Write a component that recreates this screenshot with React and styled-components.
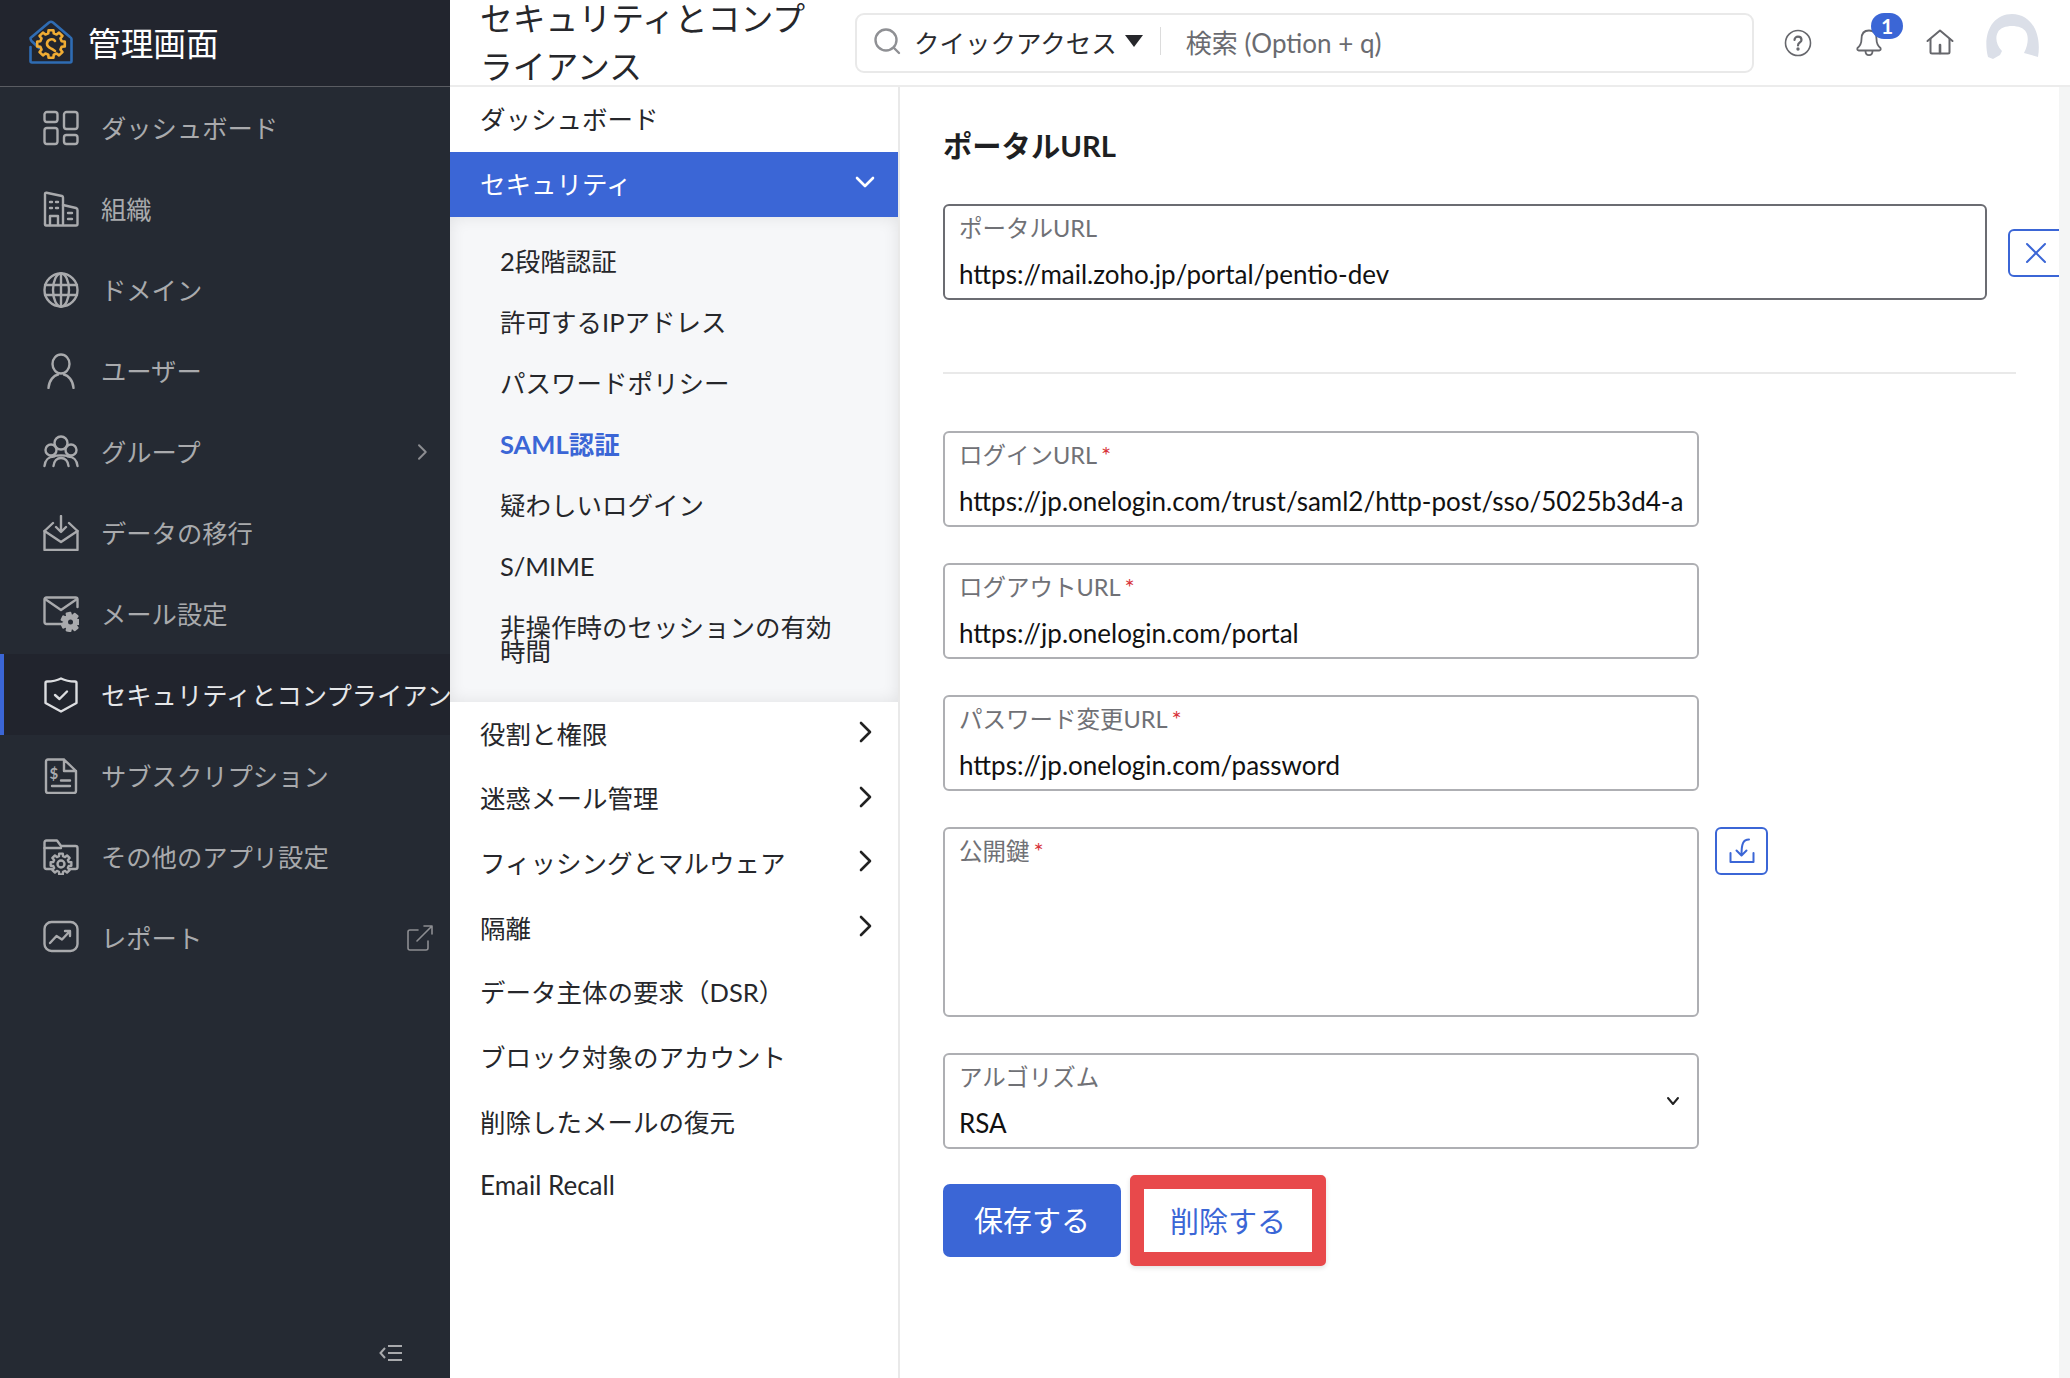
import React from 'react'
import styled, { createGlobalStyle } from 'styled-components'

const FONT = `Lato, "Noto Sans CJK JP", sans-serif`
const BLUE = '#3b66d6'

const GlobalStyle = createGlobalStyle`
  html, body {
    margin: 0;
    padding: 0;
    background: #fff;
    font-family: ${FONT};
  }
  * { box-sizing: border-box; }
`

// gear outline, used by the logo and the two settings icons
const gearPath = (cx, cy, outer, inner, teeth) => {
  const step = (Math.PI * 2) / teeth
  let d = ''
  for (let i = 0; i < teeth; i++) {
    const a = i * step
    const pts = [
      [a - step * 0.22, outer],
      [a + step * 0.22, outer],
      [a + step * 0.32, inner],
      [a + step * 0.68, inner]
    ].map(([t, r]) => `${(cx + Math.cos(t) * r).toFixed(2)} ${(cy + Math.sin(t) * r).toFixed(2)}`)
    d += `${i === 0 ? 'M' : 'L'}${pts[0]} L${pts[1]} L${pts[2]} L${pts[3]} `
  }
  return d + 'Z'
}

const Ico = ({ children, size = 36, box = 36, color = '#a9aaad', sw = 2.4 }) => (
  <svg width={size} height={size} viewBox={`0 0 ${box} ${box}`} fill="none" stroke={color} strokeWidth={sw} strokeLinecap="round" strokeLinejoin="round">
    {children}
  </svg>
)

const icons = {
  dashboard: (
    <>
      <rect x="1.500" y="2" width="13" height="10" rx="2.500" />
      <rect x="21" y="2" width="13.500" height="17" rx="2.500" />
      <rect x="1.500" y="18" width="13" height="16" rx="2.500" />
      <rect x="21" y="25" width="13.500" height="9" rx="2.500" />
    </>
  ),
  org: (
    <>
      <path d="M2 33 V3 Q2 1.500 3.500 1.800 L19 5 Q20 5.300 20 6.500 V33" />
      <path d="M20 14 L33 17 Q34.500 17.500 34.500 19 V33 Q34.500 34.500 33 34.500 H3 Q2 34.500 2 33" />
      <path d="M7 11 H9 M13 11 H15 M7 17 H9 M13 17 H15 M7 34 V25 H15 V34 M25 22 H29 M25 28 H29" />
    </>
  ),
  globe: (
    <>
      <circle cx="18" cy="18" r="16.500" />
      <ellipse cx="18" cy="18" rx="8" ry="16.500" />
      <path d="M18 1.500 V34.500 M2 13 H34 M2 23 H34" />
    </>
  ),
  user: (
    <>
      <ellipse cx="18" cy="11" rx="8.500" ry="9.500" />
      <path d="M5.500 35 C6 27 11 22.500 15 21.500 M30.500 35 C30 27 25 22.500 21 21.500" />
    </>
  ),
  group: (
    <>
      <circle cx="18" cy="9" r="6.500" />
      <circle cx="8" cy="16" r="5.500" />
      <circle cx="28" cy="16" r="5.500" />
      <path d="M1.500 32 C2 26 6 22.500 11 22.500 C13 21 23 21 25 22.500 C30 22.500 34 26 34.500 32 M10.500 32 C11 27 14 24 18 24 C22 24 25 27 25.500 32" />
    </>
  ),
  migrate: (
    <>
      <path d="M10 8 L1.500 16 V35 H34.500 V16 L26 8" />
      <path d="M1.500 16 L18 27 L34.500 16" />
      <path d="M18 1 V16 M13 12 L18 17 L23 12" />
    </>
  ),
  mail: (
    <>
      <path d="M20 28 H3.500 Q1.500 28 1.500 26 V3.500 Q1.500 1.500 3.500 1.500 H32.500 Q34.500 1.500 34.500 3.500 V11" />
      <path d="M2 3 L18 14 L34 3" />
      <path d={gearPath(27.5, 26, 9, 6.5, 7)} fill="#a9aaad" />
      <circle cx="27.500" cy="26" r="2.500" fill="#252a33" stroke="none" />
    </>
  ),
  shield: (
    <>
      <path d="M18 1.500 C22 3.500 27 4.500 32 4.500 Q33.500 4.500 33.500 6 V26 L18 34.500 L2.500 26 V6 Q2.500 4.500 4 4.500 C9 4.500 14 3.500 18 1.500 Z" />
      <path d="M12 18 L16.500 22 L24 14.500" />
    </>
  ),
  sub: (
    <>
      <path d="M21 1.500 H5 Q3 1.500 3 3.500 V33 Q3 35 5 35 H31 Q33 35 33 33 V13 L21 1.500 V13 H33" />
      <path d="M9 28 H27 M18 22.500 H27" />
      <text x="6.500" y="21" fontSize="15" fontWeight="700" fill="#a9aaad" stroke="none" fontFamily={FONT}>$</text>
    </>
  ),
  folder: (
    <>
      <path d="M9 30 H3.500 Q1.500 30 1.500 28 V3.500 Q1.500 1.500 3.500 1.500 H14 L18 7 H32.500 Q34.500 7 34.500 9 V28 Q34.500 30 32.500 30 H27" />
      <path d="M1.500 9 H18" />
      <path d={gearPath(18, 25, 10.5, 8, 8)} />
      <circle cx="18" cy="25" r="3.500" />
    </>
  ),
  report: (
    <>
      <rect x="1.500" y="2" width="33" height="29" rx="7" />
      <path d="M7 23 L13.500 16 L19 19.500 L27 11 M22 11 H27 V16" />
    </>
  )
}

const MENU = [
  { label: 'ダッシュボード', icon: 'dashboard' },
  { label: '組織', icon: 'org' },
  { label: 'ドメイン', icon: 'globe' },
  { label: 'ユーザー', icon: 'user' },
  { label: 'グループ', icon: 'group', arrow: true },
  { label: 'データの移行', icon: 'migrate' },
  { label: 'メール設定', icon: 'mail' },
  { label: 'セキュリティとコンプライアンス', icon: 'shield', active: true },
  { label: 'サブスクリプション', icon: 'sub' },
  { label: 'その他のアプリ設定', icon: 'folder' },
  { label: 'レポート', icon: 'report', external: true }
]

const SECURITY_ITEMS = ['2段階認証', '許可するIPアドレス', 'パスワードポリシー', 'SAML認証', '疑わしいログイン', 'S/MIME', '非操作時のセッションの有効時間']

const SUB_ROWS = [
  { label: '役割と権限', arrow: true },
  { label: '迷惑メール管理', arrow: true },
  { label: 'フィッシングとマルウェア', arrow: true },
  { label: '隔離', arrow: true },
  { label: 'データ主体の要求（DSR）' },
  { label: 'ブロック対象のアカウント' },
  { label: '削除したメールの復元' },
  { label: 'Email Recall', latin: true }
]

const FIELDS = [
  { label: 'ログインURL', value: 'https://jp.onelogin.com/trust/saml2/http-post/sso/5025b3d4-a' },
  { label: 'ログアウトURL', value: 'https://jp.onelogin.com/portal' },
  { label: 'パスワード変更URL', value: 'https://jp.onelogin.com/password' }
]

const ChevronRight = ({ color = '#222', size = 24 }) => (
  <svg width={size} height={size} viewBox="0 0 24 24" fill="none" stroke={color} strokeWidth="2.600" strokeLinecap="round" strokeLinejoin="round">
    <path d="M8 3 L17 12 L8 21" />
  </svg>
)

export default function App() {
  return (
    <Page>
      <GlobalStyle />
      <Sidebar>
        <Brand>
          <svg width="44" height="44" viewBox="0 0 44 44" fill="none">
            <path d="M10 28 L2.500 21 Q1.500 20 1.500 18 L20 2.500 Q22 1 24 2.500 L41 17 Q42.500 18 42.500 19 V41 Q42.500 42.500 41 42.500 H3 Q1.500 42.500 1.500 41 V27" stroke="#2f6cb3" strokeWidth="2.600" strokeLinecap="round" strokeLinejoin="round" />
            <path d={gearPath(22, 24, 14, 11, 8)} stroke="#f0ac33" strokeWidth="2.600" strokeLinejoin="round" fill="#22252e" />
            <path d="M26 21 C24 18 18.500 19 18 23.500 C17.800 27 21 28 23 29 L26 31" stroke="#f0ac33" strokeWidth="2.600" strokeLinecap="round" />
          </svg>
          <BrandName>管理画面</BrandName>
        </Brand>
        <Menu>
          {MENU.map((el) => (
            <MenuRow key={el.label} $active={el.active}>
              <MenuIcon>
                <Ico color={el.active ? '#dcdde0' : '#a9aaad'}>{icons[el.icon]}</Ico>
              </MenuIcon>
              <MenuLabel $active={el.active}>{el.label}</MenuLabel>
              {el.arrow && (
                <RowEnd $right="19px">
                  <ChevronRight color="#8c8d91" size={18} />
                </RowEnd>
              )}
              {el.external && (
                <RowEnd $right="17px">
                  <svg width="26" height="26" viewBox="0 0 26 26" fill="none" stroke="#8c8d91" strokeWidth="1.600" strokeLinecap="round" strokeLinejoin="round">
                    <path d="M11 5 H3 Q1 5 1 7 V23 Q1 25 3 25 H19 Q21 25 21 23 V16" />
                    <path d="M10 16 L25 1 M17 1 H25 V9" />
                  </svg>
                </RowEnd>
              )}
            </MenuRow>
          ))}
        </Menu>
        <Collapse>
          <svg width="24" height="18" viewBox="0 0 24 18" fill="none" stroke="#a9aaad" strokeWidth="2">
            <path d="M6 4 L1.500 9 L6 14" />
            <path d="M9 2 H23 M9 9 H23 M9 16 H23" />
          </svg>
        </Collapse>
      </Sidebar>

      <Content>
        <TopBar>
          <PageTitle>セキュリティとコンプライアンス</PageTitle>
          <SearchBox>
            <svg width="30" height="30" viewBox="0 0 30 30" fill="none" stroke="#8f9094" strokeWidth="2.400" strokeLinecap="round">
              <circle cx="14" cy="14" r="10.500" />
              <path d="M22 22 L27 27" />
            </svg>
            <QuickAccess>クイックアクセス</QuickAccess>
            <Caret />
            <SearchDivider />
            <SearchHint>検索 (Option + q)</SearchHint>
          </SearchBox>
          <TopIcons>
            <TopIcon>
              <svg width="28" height="28" viewBox="0 0 28 28" fill="none" stroke="#66676c" strokeWidth="1.600" strokeLinecap="round">
                <circle cx="14" cy="14" r="12.500" />
                <path d="M10.500 11 C10.500 6.500 17.500 6.500 17.500 11 C17.500 13.500 14 13.500 14 16.500" strokeWidth="2.200" />
                <circle cx="14" cy="20" r="1" strokeWidth="1.400" fill="#66676c" />
              </svg>
            </TopIcon>
            <TopIcon>
              <svg width="26" height="28" viewBox="0 0 26 28" fill="none" stroke="#66676c" strokeWidth="1.800" strokeLinecap="round" strokeLinejoin="round">
                <path d="M13 1.500 C7 1.500 5.500 6 5.500 10 C5.500 15 4 17 1.500 19 Q0.800 21 2.500 21.500 H23.500 Q25.200 21 24.500 19 C22 17 20.500 15 20.500 10 C20.500 6 19 1.500 13 1.500 Z" />
                <path d="M9.500 22 C9.500 27.500 16.500 27.500 16.500 22" />
              </svg>
              <Badge>1</Badge>
            </TopIcon>
            <TopIcon>
              <svg width="28" height="26" viewBox="0 0 28 26" fill="none" stroke="#66676c" strokeWidth="2" strokeLinecap="round" strokeLinejoin="round">
                <path d="M1.500 12 L14 1.500 L26.500 12" />
                <path d="M4.500 10 V23 Q4.500 24.500 6 24.500 H22 Q23.500 24.500 23.500 23 V10" />
                <path d="M14 24 V16" strokeWidth="2.600" />
              </svg>
            </TopIcon>
            <Avatar>
              <svg width="58" height="48" viewBox="0 0 58 48" fill="#dbdfe8">
                <path d="M5 44 C-1 20 10 1 29 1 C48 1 59 20 55 44 L41 40 C45 32 46 24 43 19 C39 11 19 11 15 19 C12 24 13 32 19 38 L17 42 L10 46 Z" />
              </svg>
            </Avatar>
          </TopIcons>
        </TopBar>

        <Body>
          <SubNav>
            <SubRow>ダッシュボード</SubRow>
            <SubRow $open>
              セキュリティ
              <svg width="24" height="24" viewBox="0 0 24 24" fill="none" stroke="#fff" strokeWidth="2.600" strokeLinecap="round" strokeLinejoin="round">
                <path d="M4 8 L12 16 L20 8" />
              </svg>
            </SubRow>
            <SecurityList>
              {SECURITY_ITEMS.map((el) => (
                <SecurityItem key={el} $current={el === 'SAML認証'}>{el}</SecurityItem>
              ))}
            </SecurityList>
            {SUB_ROWS.map((el) => (
              <SubRow key={el.label} $latin={el.latin}>
                {el.label}
                {el.arrow && <ChevronRight />}
              </SubRow>
            ))}
          </SubNav>

          <Main>
            <SectionTitle>ポータルURL</SectionTitle>
            <PortalRow>
              <Field $dark $wide>
                <FieldLabel>ポータルURL</FieldLabel>
                <FieldValue>https://mail.zoho.jp/portal/pentio-dev</FieldValue>
              </Field>
              <CloseButton>
                <svg width="22" height="22" viewBox="0 0 22 22" fill="none" stroke={BLUE} strokeWidth="2" strokeLinecap="round">
                  <path d="M2 2 L20 20 M20 2 L2 20" />
                </svg>
              </CloseButton>
            </PortalRow>
            <Divider />
            {FIELDS.map((el) => (
              <Field key={el.label}>
                <FieldLabel>{el.label}<Required>*</Required></FieldLabel>
                <FieldValue>{el.value}</FieldValue>
              </Field>
            ))}
            <KeyRow>
              <Field $tall>
                <FieldLabel>公開鍵<Required>*</Required></FieldLabel>
              </Field>
              <IconButton>
                <svg width="26" height="26" viewBox="0 0 26 26" fill="none" stroke={BLUE} strokeWidth="2" strokeLinecap="round" strokeLinejoin="round">
                  <path d="M1.500 15 V24 H24.500 V15" />
                  <path d="M20 1.500 C14 1.500 12.500 6 12.500 17 M7.500 12.500 L12.500 17.500 L17.500 12.500" />
                </svg>
              </IconButton>
            </KeyRow>
            <Field>
              <FieldLabel>アルゴリズム</FieldLabel>
              <FieldValue>RSA</FieldValue>
              <SelectArrow>
                <svg width="14" height="10" viewBox="0 0 14 10" fill="none" stroke="#222" strokeWidth="2" strokeLinecap="round" strokeLinejoin="round">
                  <path d="M2 2 L7 8 L12 2" />
                </svg>
              </SelectArrow>
            </Field>
            <Actions>
              <SaveButton>保存する</SaveButton>
              <DeleteButton>削除する</DeleteButton>
            </Actions>
          </Main>
          <ScrollTrack />
        </Body>
      </Content>
    </Page>
  )
}

const Page = styled.div`
  display: flex;
  width: 2070px;
  height: 1378px;
  overflow: hidden;
  background: #fff;
`
const Sidebar = styled.aside`
  position: relative;
  flex: 0 0 450px;
  display: flex;
  flex-direction: column;
  background: #252a33;
  overflow: hidden;
`
const Brand = styled.div`
  height: 87px;
  flex: none;
  display: flex;
  align-items: center;
  gap: 15px;
  padding: 0 0 2px 29px;
  background: #22252e;
  border-bottom: 1px solid #5a5c62;
`
const BrandName = styled.div`
  padding-bottom: 2px;
  font-size: 32.700px;
  color: #fff;
`
const Menu = styled.nav`
  display: flex;
  flex-direction: column;
`
const MenuRow = styled.div`
  position: relative;
  height: 81px;
  flex: none;
  display: flex;
  align-items: center;
  padding-left: ${(p) => (p.$active ? '39px' : '43px')};
  border-left: ${(p) => (p.$active ? `4px solid ${BLUE}` : 'none')};
  background: ${(p) => (p.$active ? '#21242d' : 'transparent')};
  white-space: nowrap;
`
const MenuIcon = styled.span`
  display: flex;
  width: 36px;
  height: 36px;
  margin-right: 22px;
  flex: none;
`
const MenuLabel = styled.span`
  padding-bottom: 2px;
  font-size: 25.300px;
  color: ${(p) => (p.$active ? '#e6e7e9' : '#a9aaad')};
`
const RowEnd = styled.span`
  position: absolute;
  right: ${(p) => p.$right};
  top: 50%;
  transform: translateY(-50%);
  display: flex;
`
const Collapse = styled.div`
  position: absolute;
  right: 47px;
  bottom: 16px;
  display: flex;
`
const Content = styled.div`
  flex: 1;
  min-width: 0;
  display: flex;
  flex-direction: column;
`
const TopBar = styled.header`
  height: 87px;
  flex: none;
  display: flex;
  align-items: center;
  padding-left: 30px;
  border-bottom: 2px solid #ececec;
`
const PageTitle = styled.h1`
  width: 345px;
  flex: none;
  margin: 0 30px 0 0;
  font-size: 32.800px;
  font-weight: 400;
  line-height: 48px;
  color: #26272b;
`
const SearchBox = styled.div`
  width: 899px;
  height: 60px;
  flex: none;
  display: flex;
  align-items: center;
  padding: 0 0 3px 15px;
  border: 2px solid #e9e9e9;
  border-radius: 9px;
`
const QuickAccess = styled.span`
  margin-left: 12px;
  font-size: 25.500px;
  color: #2a2b2f;
`
const Caret = styled.span`
  width: 0;
  height: 0;
  margin-left: 8px;
  border-left: 9px solid transparent;
  border-right: 9px solid transparent;
  border-top: 12px solid #26272b;
`
const SearchDivider = styled.span`
  width: 1px;
  height: 28px;
  margin: 0 25px 0 17px;
  background: #dcdcdc;
`
const SearchHint = styled.span`
  font-size: 26px;
  color: #6a6b70;
`
const TopIcons = styled.div`
  display: flex;
  align-items: center;
  margin-left: 30px;
`
const TopIcon = styled.span`
  position: relative;
  width: 28px;
  height: 28px;
  margin-right: 43px;
  display: flex;
  justify-content: center;
`
const Avatar = styled.span`
  display: flex;
  margin: -12px 0 0 -14px;
`
const Badge = styled.span`
  position: absolute;
  left: 16px;
  top: -16px;
  width: 32px;
  height: 26px;
  border-radius: 13px;
  background: ${BLUE};
  color: #fff;
  font-size: 21px;
  font-weight: 700;
  line-height: 26px;
  text-align: center;
`
const Body = styled.div`
  flex: 1;
  min-height: 0;
  display: flex;
`
const SubNav = styled.nav`
  flex: 0 0 450px;
  display: flex;
  flex-direction: column;
  border-right: 2px solid #e9e9e9;
`
const SubRow = styled.div`
  height: ${(p) => (p.$open ? '65px' : '64.700px')};
  flex: none;
  display: flex;
  align-items: center;
  justify-content: space-between;
  padding: 0 21px 4px 30px;
  font-size: ${(p) => (p.$latin ? '26px' : '25.500px')};
  color: ${(p) => (p.$open ? '#fff' : '#26272b')};
  background: ${(p) => (p.$open ? BLUE : 'transparent')};
`
const SecurityList = styled.div`
  padding: 14px 50px 20px 50px;
  background: #f6f7f9;
  box-shadow: inset 0 0 16px rgba(0, 0, 0, 0.09);
`
const SecurityItem = styled.div`
  padding: 18.500px 0;
  font-size: 25.500px;
  line-height: 24px;
  font-weight: ${(p) => (p.$current ? 700 : 400)};
  color: ${(p) => (p.$current ? BLUE : '#26272b')};
`
const Main = styled.main`
  flex: 1;
  min-width: 0;
  padding: 39px 0 0 43px;
  overflow: hidden;
`
const SectionTitle = styled.h2`
  margin: 0 0 38px;
  font-size: 29.300px;
  font-weight: 700;
  line-height: 40px;
  color: #1e1f22;
`
const PortalRow = styled.div`
  display: flex;
  align-items: center;
  gap: 21px;
`
const Field = styled.div`
  position: relative;
  width: ${(p) => (p.$wide ? '1044px' : '756px')};
  height: ${(p) => (p.$tall ? '190px' : '96px')};
  flex: none;
  margin-bottom: ${(p) => (p.$wide || p.$tall ? '0' : '36px')};
  padding: 6px 14px 0;
  border: 2px solid ${(p) => (p.$dark ? '#6b6c72' : '#aeafb3')};
  border-radius: 6px;
  overflow: hidden;
`
const FieldLabel = styled.div`
  font-size: 23.500px;
  line-height: 32px;
  color: #707176;
`
const Required = styled.span`
  margin-left: 4px;
  color: #d8343a;
  font-size: 24px;
  line-height: 0;
`
const FieldValue = styled.div`
  margin-top: 14px;
  font-size: 26px;
  line-height: 32px;
  color: #111;
  white-space: nowrap;
`
const SelectArrow = styled.span`
  position: absolute;
  right: 17px;
  top: 41px;
  display: flex;
`
const IconButton = styled.button`
  width: 53px;
  height: 48px;
  flex: none;
  display: flex;
  align-items: center;
  justify-content: center;
  padding: 0;
  background: #fff;
  border: 2px solid ${BLUE};
  border-radius: 6px;
`
const CloseButton = styled(IconButton)`
  width: 56px;
  margin-top: 2px;
`
const Divider = styled.hr`
  width: 1073px;
  height: 2px;
  margin: 72px 0 57px;
  border: 0;
  background: #e9e9e9;
`
const KeyRow = styled.div`
  display: flex;
  align-items: flex-start;
  gap: 16px;
  margin-bottom: 36px;
`
const Actions = styled.div`
  display: flex;
  align-items: center;
  gap: 9px;
  margin-top: -10px;
`
const SaveButton = styled.button`
  width: 178px;
  height: 73px;
  padding: 0 0 3px;
  border: 0;
  border-radius: 7px;
  background: ${BLUE};
  color: #fff;
  font-family: ${FONT};
  font-size: 29px;
`
const DeleteButton = styled.button`
  width: 196px;
  height: 91px;
  padding: 0 0 2px;
  border: 14px solid #e8494b;
  border-radius: 5px;
  background: #fff;
  color: ${BLUE};
  font-family: ${FONT};
  font-size: 29px;
  box-shadow: 0 2px 5px rgba(0, 0, 0, 0.12);
`
const ScrollTrack = styled.div`
  flex: 0 0 11px;
  background: #f4f5f5;
`
